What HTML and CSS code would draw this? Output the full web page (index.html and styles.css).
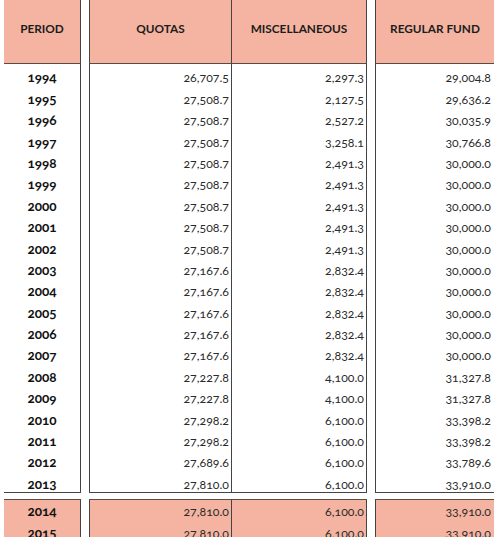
FILE: index.html
```html
<!DOCTYPE html>
<html lang="en">

<head>
    <meta charset="UTF-8">
    <meta name="viewport" content="width=device-width, initial-scale=1.0">
    <title>Regular Fund</title>
    <link rel="stylesheet" href="styles.css">
</head>

<body>
    <!-- Column headings -->
    <div class="grid head">
        <div class="cell period">PERIOD</div>
        <div class="cell quotas">QUOTAS</div>
        <div class="cell misc">MISCELLANEOUS</div>
        <div class="cell fund">REGULAR FUND</div>
    </div>

    <!-- Past years -->
    <div class="grid body" id="pastRows"></div>

    <!-- Current biennium -->
    <div class="grid body current" id="currentRows"></div>

    <script>
        // amounts in thousands
        const past = [
            [1994, 26707.5, 2297.3],
            [1995, 27508.7, 2127.5],
            [1996, 27508.7, 2527.2],
            [1997, 27508.7, 3258.1],
            [1998, 27508.7, 2491.3],
            [1999, 27508.7, 2491.3],
            [2000, 27508.7, 2491.3],
            [2001, 27508.7, 2491.3],
            [2002, 27508.7, 2491.3],
            [2003, 27167.6, 2832.4],
            [2004, 27167.6, 2832.4],
            [2005, 27167.6, 2832.4],
            [2006, 27167.6, 2832.4],
            [2007, 27167.6, 2832.4],
            [2008, 27227.8, 4100.0],
            [2009, 27227.8, 4100.0],
            [2010, 27298.2, 6100.0],
            [2011, 27298.2, 6100.0],
            [2012, 27689.6, 6100.0],
            [2013, 27810.0, 6100.0],
        ];

        const current = [
            [2014, 27810.0, 6100.0],
            [2015, 27810.0, 6100.0],
        ];

        function money(n) {
            return n.toLocaleString('en-US', { minimumFractionDigits: 1, maximumFractionDigits: 1 });
        }

        function fillRows(id, rows) {
            const grid = document.getElementById(id);
            rows.forEach(([year, quotas, misc], i) => {
                const last = i === rows.length - 1 ? ' last' : '';
                grid.innerHTML += `
                <div class="cell period${last}">${year}</div>
                <div class="cell quotas num${last}">${money(quotas)}</div>
                <div class="cell misc num${last}">${money(misc)}</div>
                <div class="cell fund num${last}">${money(quotas + misc)}</div>
                `;
            });
        }

        fillRows('pastRows', past);
        fillRows('currentRows', current);
    </script>
</body>

</html>
```
FILE: styles.css
```css
* {
    margin: 0;
    padding: 0;
    box-sizing: border-box;
}

body {
    font-family: Lato, "Open Sans", sans-serif;
    font-size: 12.3px;
    color: #2a2a2a;
    margin-left: 4px;
    background: #fff;
    font-variant-numeric: oldstyle-nums;
}

/* shared column layout: period | quotas | misc | fund */
.grid {
    display: grid;
    grid-template-columns: 85px 143px 135px 127px;
}

.cell {
    display: flex;
    align-items: flex-end;
    justify-content: flex-end;
    line-height: 15px;
    border-color: #444;
    border-style: solid;
    border-width: 0;
}

.period {
    margin-right: 8px;
    border-right-width: 1px;
    justify-content: center;
    font-weight: bold;
    font-size: 13.5px;
    color: #111;
}

.quotas {
    border-left-width: 1px;
    border-right-width: 1px;
}

.misc {
    border-right-width: 1px;
}

.fund {
    margin-left: 8px;
    border-left-width: 1px;
}

.num {
    padding-right: 2px;
}

.fund.num {
    padding-right: 3px;
}

/* Header */
.head .cell {
    height: 64px;
    background-color: #f4b4a1;
    border-bottom: 1px solid #5c4a45;
    justify-content: center;
    align-items: center;
    padding-bottom: 6px;
    font-weight: bold;
    font-size: 11.8px;
    color: #1c1c1c;
}

/* Rows */
.body .cell {
    height: 21.4px;
    padding-bottom: 0;
}

.body .last {
    border-bottom-width: 1px;
    height: 22.4px;
}

.current {
    margin-top: 6px;
}

.current .cell {
    background-color: #f4b4a1;
    border-top: 1px solid #5c4a45;
    padding-bottom: 1px;
}

.current .cell:nth-child(n+5) {
    border-top-width: 0;
}
```
